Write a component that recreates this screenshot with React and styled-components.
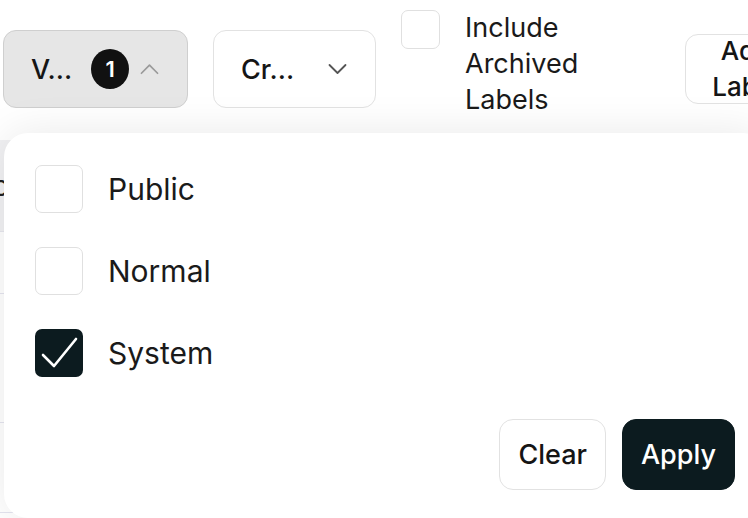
import React from "react";
import styled, { createGlobalStyle } from "styled-components";

const GlobalStyle = createGlobalStyle`
  html, body {
    margin: 0;
    padding: 0;
    background: #ffffff;
    font-family: Inter, "Noto Sans", "Liberation Sans", sans-serif;
    color: #151515;
    overflow: hidden;
  }
  * { box-sizing: border-box; }
`;

const options = [
  { label: "Public", checked: false },
  { label: "Normal", checked: false },
  { label: "System", checked: true },
];

const ChevronUp = () => (
  <svg width="20" height="12" viewBox="0 0 20 12" fill="none">
    <path d="M1.5 10.5L10 2l8.5 8.5" stroke="#9a9a9a" strokeWidth="1.8" strokeLinecap="round" strokeLinejoin="round" />
  </svg>
);

const ChevronDown = () => (
  <svg width="19" height="12" viewBox="0 0 19 12" fill="none">
    <path d="M1.5 2l8 8 8-8" stroke="#555" strokeWidth="1.8" strokeLinecap="round" strokeLinejoin="round" />
  </svg>
);

const CheckMark = () => (
  <svg width="48" height="48" viewBox="0 0 48 48" fill="none">
    <path d="M8 26l11 11L41 10" stroke="#fff" strokeWidth="2.6" strokeLinecap="round" strokeLinejoin="round" />
  </svg>
);

const App = () => {
  return (
    <Page>
      <GlobalStyle />
      <Toolbar>
        <FilterButton $active style={{ width: 185 }}>
          <ButtonText>V...</ButtonText>
          <Badge>1</Badge>
          <ChevronUp />
        </FilterButton>
        <FilterButton style={{ width: 163 }}>
          <ButtonText>Cr...</ButtonText>
          <Spacer />
          <ChevronDown />
        </FilterButton>
        <ArchivedToggle>
          <Box />
          <ArchivedLabel>
            Include
            <br />
            Archived
            <br />
            Labels
          </ArchivedLabel>
        </ArchivedToggle>
        <AddButton>
          Add
          <br />
          Label
        </AddButton>
      </Toolbar>

      <Table>
        <HeaderRow>
          <HeaderCell>Topic</HeaderCell>
        </HeaderRow>
        <Row $h={62} />
        <Row $h={129} />
        <Row $h={90} />
      </Table>

      <Popover>
        <OptionList>
          {options.map((o) => (
            <OptionRow key={o.label}>
              <Box $checked={o.checked} $size={48}>
                {o.checked && <CheckMark />}
              </Box>
              <OptionLabel>{o.label}</OptionLabel>
            </OptionRow>
          ))}
        </OptionList>
        <Actions>
          <ActionButton>Clear</ActionButton>
          <ActionButton $primary>Apply</ActionButton>
        </Actions>
      </Popover>
    </Page>
  );
};

export default App;

const Page = styled.div`
  position: relative;
  width: 748px;
  height: 518px;
  overflow: hidden;
  background: #fff;
`;

const Toolbar = styled.div`
  display: flex;
  align-items: center;
  gap: 25px;
  height: 138px;
  padding-left: 3px;
  white-space: nowrap;
`;

const FilterButton = styled.div`
  flex-shrink: 0;
  display: flex;
  align-items: center;
  height: 78px;
  padding: 0 28px 0 27px;
  border-radius: 13px;
  border: 1.5px solid ${(p) => (p.$active ? "#cfcfcf" : "#e2e2e2")};
  background: ${(p) => (p.$active ? "#e6e6e6" : "#ffffff")};
`;

const ButtonText = styled.span`
  font-size: 27px;
  font-weight: 500;
  color: #151515;
  margin-right: 19px;
`;

const Spacer = styled.span`
  flex: 1;
`;

const Badge = styled.span`
  width: 40px;
  height: 40px;
  border-radius: 50%;
  background: #111;
  color: #fff;
  font-size: 22px;
  font-weight: 600;
  display: flex;
  align-items: center;
  justify-content: center;
  margin-right: 11px;
`;

const ArchivedToggle = styled.div`
  flex-shrink: 0;
  display: flex;
  align-items: flex-start;
  gap: 25px;
  margin-top: -10px;
  width: 259px;
`;

const Box = styled.div`
  flex-shrink: 0;
  width: ${(p) => p.$size || 39}px;
  height: ${(p) => p.$size || 39}px;
  border-radius: 7px;
  border: ${(p) => (p.$checked ? "none" : "1.5px solid #e0e0e0")};
  background: ${(p) => (p.$checked ? "#0c1b1f" : "#fff")};
  display: flex;
  align-items: center;
  justify-content: center;
`;

const ArchivedLabel = styled.div`
  font-size: 27px;
  line-height: 36px;
  color: #1a1a1a;
`;

const AddButton = styled.div`
  flex-shrink: 0;
  width: 122px;
  height: 70px;
  border-radius: 13px;
  border: 1.5px solid #e2e2e2;
  font-size: 26px;
  font-weight: 500;
  line-height: 36px;
  text-align: center;
  display: flex;
  align-items: center;
  justify-content: center;
`;

const Table = styled.div`
  display: flex;
  flex-direction: column;
  margin-top: 2px;
`;

const HeaderRow = styled.div`
  height: 92px;
  background: #f1f1f3;
  display: flex;
  align-items: center;
  border-bottom: 1px solid #e6e6ee;
`;

const HeaderCell = styled.span`
  font-size: 28px;
  margin-left: -64px;
  color: #222;
`;

const Row = styled.div`
  height: ${(p) => p.$h}px;
  border-bottom: 1.5px solid #e4e4ef;
`;

const Popover = styled.div`
  position: absolute;
  left: 4px;
  top: 133px;
  width: 763px;
  height: 385px;
  background: #fff;
  border-radius: 24px;
  box-shadow: 0 0 44px rgba(0, 0, 0, 0.09);
  padding: 32px 32px 28px 31px;
  display: flex;
  flex-direction: column;
`;

const OptionList = styled.div`
  display: flex;
  flex-direction: column;
  gap: 34px;
`;

const OptionRow = styled.div`
  display: flex;
  align-items: center;
  gap: 25px;
  height: 48px;
`;

const OptionLabel = styled.span`
  font-size: 30px;
  color: #1a1a1a;
`;

const Actions = styled.div`
  margin-top: auto;
  display: flex;
  justify-content: flex-end;
  gap: 16px;
`;

const ActionButton = styled.div`
  height: 71px;
  padding: 0 18px;
  border-radius: 14px;
  display: flex;
  align-items: center;
  font-size: 27px;
  font-weight: 500;
  border: 1.5px solid ${(p) => (p.$primary ? "#0c1b1f" : "#e2e2e2")};
  background: ${(p) => (p.$primary ? "#0c1b1f" : "#fff")};
  color: ${(p) => (p.$primary ? "#fff" : "#151515")};
`;
